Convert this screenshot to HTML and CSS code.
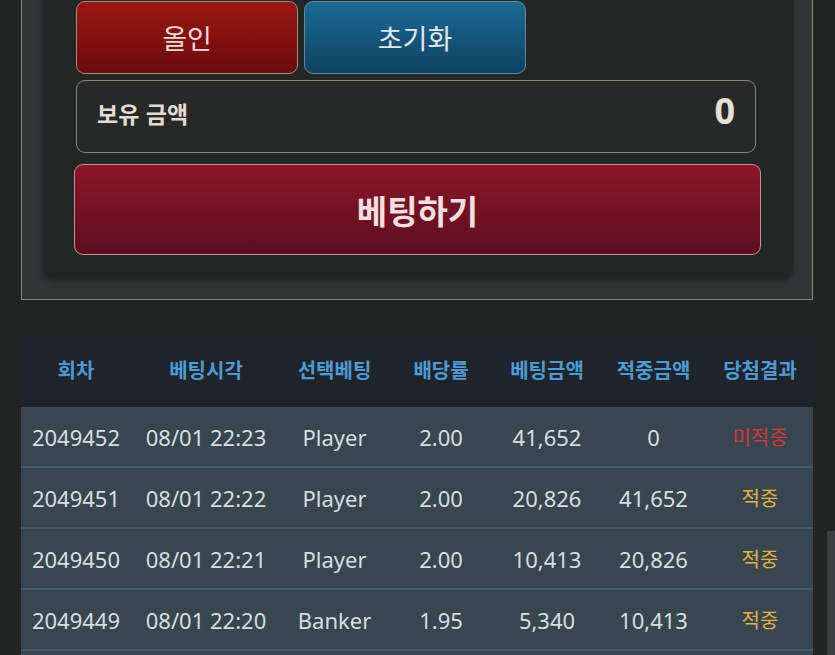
FILE: index.html
```html
<!DOCTYPE html>
<html lang="ko">
<head>
<meta charset="utf-8">
<title>베팅</title>
<link rel="stylesheet" href="styles.css">
</head>
<body>
<div class="page">
  <section class="outer">
    <div class="panel">
      <div class="btn-row">
        <button class="btn btn-allin">올인</button>
        <button class="btn btn-reset">초기화</button>
      </div>
      <div class="balance">
        <span class="balance-label">보유 금액</span>
        <span class="balance-value">0</span>
      </div>
      <button class="btn-bet">베팅하기</button>
    </div>
  </section>

  <table class="history">
    <colgroup>
      <col class="c1"><col class="c2"><col class="c3"><col class="c4"><col class="c5"><col class="c6"><col class="c7">
    </colgroup>
    <thead>
      <tr>
        <th>회차</th><th>베팅시각</th><th>선택베팅</th><th>배당률</th><th>베팅금액</th><th>적중금액</th><th>당첨결과</th>
      </tr>
    </thead>
    <tbody>
      <tr><td>2049452</td><td>08/01 22:23</td><td>Player</td><td>2.00</td><td>41,652</td><td>0</td><td class="lose">미적중</td></tr>
      <tr><td>2049451</td><td>08/01 22:22</td><td>Player</td><td>2.00</td><td>20,826</td><td>41,652</td><td class="win">적중</td></tr>
      <tr><td>2049450</td><td>08/01 22:21</td><td>Player</td><td>2.00</td><td>10,413</td><td>20,826</td><td class="win">적중</td></tr>
      <tr><td>2049449</td><td>08/01 22:20</td><td>Banker</td><td>1.95</td><td>5,340</td><td>10,413</td><td class="win">적중</td></tr>
      <tr class="next"><td></td><td></td><td></td><td></td><td></td><td></td><td></td></tr>
    </tbody>
  </table>
</div>
<div class="scroll-thumb"></div>
</body>
</html>
```

FILE: styles.css
```css
html, body {
  margin: 0;
  padding: 0;
  height: 100%;
  overflow: hidden;
}
body {
  background: #222423;
  font-family: "Noto Sans", "Noto Sans CJK KR", sans-serif;
  color: #d6dee3;
}
.page {
  padding: 0 22px 0 21px;
}
.outer {
  margin-top: -40px;
  border: 1px solid #8b8878;
  border-top: none;
  background: #2f3638;
  padding: 21px 19px 21px 21px;
}
.panel {
  background: #222625;
  border-radius: 10px;
  box-shadow: 0 3px 6px rgba(0, 0, 0, 0.35);
  padding: 20px 37px 23px 33px;
  display: flex;
  flex-direction: column;
}
.btn-row {
  display: flex;
  gap: 6px;
}
.btn {
  width: 222px;
  height: 73px;
  border-radius: 9px;
  font-family: "Noto Sans CJK KR", sans-serif;
  font-size: 27px;
  font-weight: 400;
  color: #ecdcd8;
  padding: 0;
  cursor: pointer;
}
.btn-allin {
  background: linear-gradient(#9b1612, #6b0c0c);
  border: 1px solid #a48a82;
}
.btn-reset {
  background: linear-gradient(#1b6b96, #0f4262);
  border: 1px solid #66879a;
  color: #e4e8ea;
}
.balance {
  margin-top: 6px;
  height: 73px;
  box-sizing: border-box;
  border: 1px solid #8a877a;
  border-radius: 9px;
  background: #272928;
  display: flex;
  align-items: center;
  justify-content: space-between;
  padding: 0 20px 0 20px;
}
.balance-label {
  font-family: "Noto Sans CJK KR", sans-serif;
  font-size: 23px;
  font-weight: 700;
  color: #e2ddd4;
  margin-top: -8px;
}
.balance-value {
  font-family: "Noto Sans", sans-serif;
  font-size: 36px;
  font-weight: 700;
  color: #e6e1d8;
  margin-top: -12px;
}
.btn-bet {
  margin: 11px -5px 0 -2px;
  height: 91px;
  border-radius: 9px;
  border: 1px solid #b99792;
  background: linear-gradient(#8c1529, #5d0e1e);
  font-family: "Noto Sans CJK KR", sans-serif;
  font-size: 33px;
  font-weight: 700;
  color: #f2e0e0;
  padding: 0;
  cursor: pointer;
}
.history {
  margin-top: 35px;
  width: 792px;
  border-collapse: collapse;
  table-layout: fixed;
}
.c1 { width: 110px; }
.c2 { width: 150px; }
.c3 { width: 107px; }
.c4 { width: 106px; }
.c5 { width: 106px; }
.c6 { width: 107px; }
.c7 { width: 106px; }
.history th {
  height: 69px;
  background: #1e242a;
  color: #4c9bd4;
  font-family: "Noto Sans CJK KR", sans-serif;
  font-size: 20px;
  font-weight: 700;
  padding: 0 0 3px;
  text-align: center;
}
.history td {
  height: 59px;
  background: #37464f;
  border-bottom: 2px solid #405a6c;
  font-size: 22px;
  color: #d6dee3;
  padding: 0;
  text-align: center;
  white-space: nowrap;
}
.history td.lose {
  color: #d8363c;
  font-family: "Noto Sans CJK KR", sans-serif;
  font-size: 20px;
}
.history td.win {
  color: #e2b140;
  font-family: "Noto Sans CJK KR", sans-serif;
  font-size: 20px;
}
.scroll-thumb {
  position: fixed;
  right: 0;
  top: 531px;
  width: 8px;
  height: 124px;
  background: #3b3f41;
}
```
